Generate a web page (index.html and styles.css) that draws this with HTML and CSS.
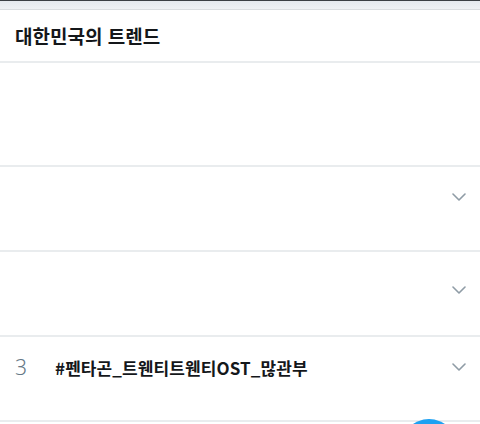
FILE: index.html
```html
<!DOCTYPE html>
<html lang="ko">
<head>
<meta charset="utf-8">
<link rel="stylesheet" href="styles.css">
</head>
<body>
<div class="topbar"></div>
<div class="band"></div>
<div class="panel">
  <div class="header">대한민국의 트렌드</div>
  <div class="row row-tall"></div>
  <div class="row row-a">
    <div class="main"></div>
    <svg class="chev" viewBox="0 0 14 8" width="14" height="8"><path d="M1 1 L7 7 L13 1" fill="none" stroke="#8f9ca6" stroke-width="1.6" stroke-linecap="round" stroke-linejoin="round"/></svg>
  </div>
  <div class="row row-b">
    <div class="main"></div>
    <svg class="chev" viewBox="0 0 14 8" width="14" height="8"><path d="M1 1 L7 7 L13 1" fill="none" stroke="#8f9ca6" stroke-width="1.6" stroke-linecap="round" stroke-linejoin="round"/></svg>
  </div>
  <div class="row row-a">
    <div class="main">
      <span class="rank">3</span>
      <span class="tag">#펜타곤_트웬티트웬티OST_많관부</span>
    </div>
    <svg class="chev" viewBox="0 0 14 8" width="14" height="8"><path d="M1 1 L7 7 L13 1" fill="none" stroke="#8f9ca6" stroke-width="1.6" stroke-linecap="round" stroke-linejoin="round"/></svg>
  </div>
</div>
<div class="fab-clip"><div class="fab"></div></div>
</body>
</html>
```
FILE: styles.css
```css
html, body {
  margin: 0;
  padding: 0;
  background: #ffffff;
  overflow: hidden;
  height: 424px;
  font-family: "Noto Sans CJK KR", "Noto Sans", sans-serif;
}
body { position: relative; }
.panel { height: 415px; overflow: hidden; }
.topbar {
  height: 1px;
  background: #3a3f44;
}
.band {
  height: 8px;
  background: linear-gradient(#e4e9ee, #eef1f4);
  border-bottom: 1px solid #d9dde0;
}
.header {
  height: 53px;
  box-sizing: border-box;
  padding-left: 15px;
  display: flex;
  align-items: center;
  font-size: 19px;
  font-weight: 700;
  color: #14171a;
  border-bottom: 2px solid #e9ecee;
}
.row {
  display: flex;
  align-items: flex-start;
  padding: 0 14px 0 15px;
  box-sizing: border-box;
  border-bottom: 2px solid #e9ecee;
}
.row-tall { height: 104px; }
.row-a { height: 85px; }
.row-b { height: 85px; }
.main {
  flex: 1;
  display: flex;
  align-items: center;
  height: 60px;
}
.chev { margin-top: 26px; flex: none; }
.row-b .chev { margin-top: 34px; }
.rank {
  width: 40px;
  font-family: "Noto Sans", sans-serif;
  font-size: 21px;
  font-weight: 300;
  color: #657786;
}
.tag {
  font-size: 17px;
  font-weight: 700;
  color: #14171a;
  letter-spacing: 0.1px;
}
.fab-clip {
  position: absolute;
  left: 401px;
  top: 419px;
  width: 56px;
  height: 5px;
  overflow: hidden;
}
.fab {
  width: 56px;
  height: 56px;
  border-radius: 50%;
  background: #1da1f2;
}
```
